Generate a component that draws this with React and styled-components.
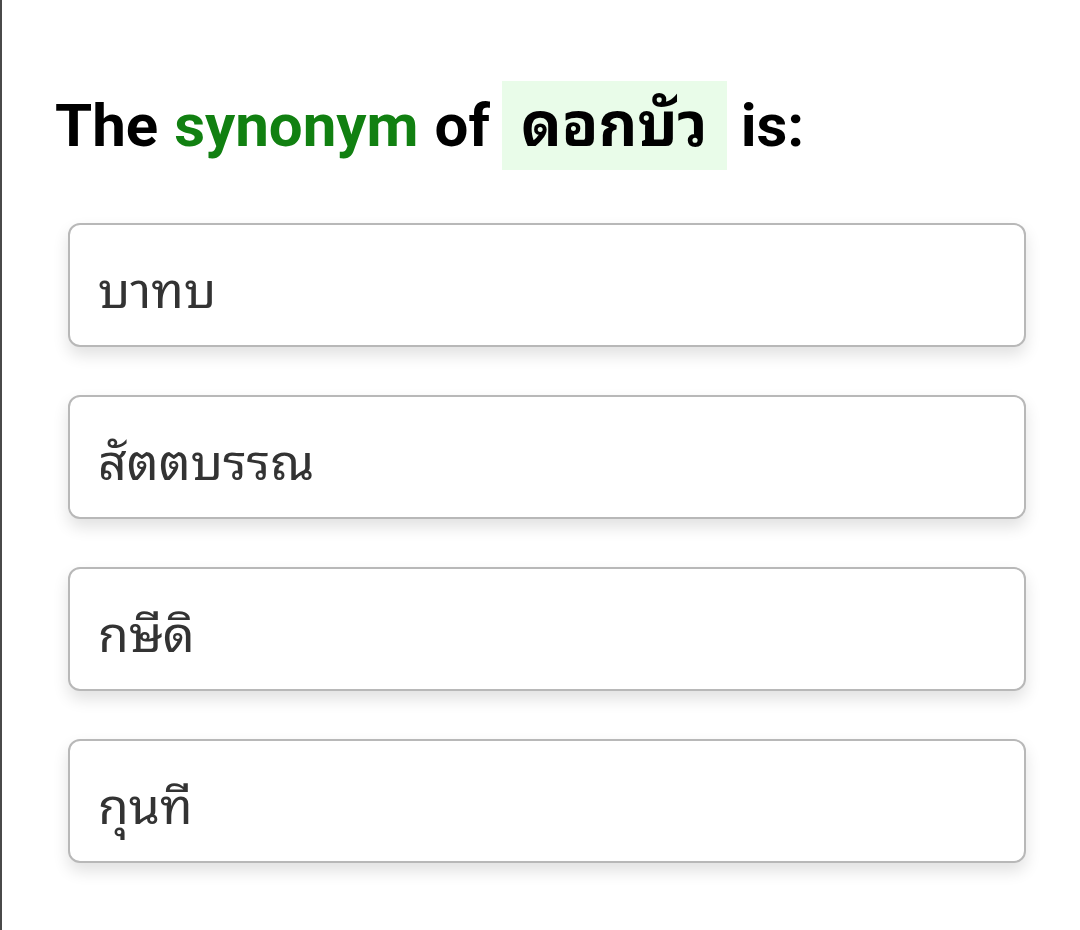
import React from "react";
import styled, { createGlobalStyle } from "styled-components";

const GlobalStyle = createGlobalStyle`
  html, body {
    margin: 0;
    padding: 0;
    background: #ffffff;
  }
  body {
    font-family: Roboto, "Noto Sans Thai Looped", Loma, Garuda, "Noto Sans", sans-serif;
  }
`;

const Page = styled.div`
  min-height: 930px;
  box-sizing: border-box;
  border-left: 2px solid #4a4a4a;
  padding: 81px 54px 0 53px;
`;

const Question = styled.h1`
  margin: 0;
  display: flex;
  align-items: center;
  font-size: 60px;
  font-weight: 700;
  color: #000;
  line-height: 89px;
`;

const Green = styled.span`
  color: #118011;
  margin: 0 16px;
`;

const Word = styled.span`
  background: #e9fce9;
  padding: 0 19px;
  margin: 0 14px 0 12px;
`;

const Options = styled.div`
  display: flex;
  flex-direction: column;
  gap: 48px;
  margin: 53px 0 0 13px;
`;

const Option = styled.button`
  display: flex;
  align-items: center;
  height: 124px;
  box-sizing: border-box;
  padding: 0 28px;
  background: #fff;
  border: 2px solid #b8b8b8;
  border-radius: 12px;
  box-shadow: 0 8px 16px rgba(0, 0, 0, 0.12);
  font-family: Roboto, "Noto Sans Thai Looped", Loma, Garuda, "Noto Sans", sans-serif;
  font-size: 50px;
  font-weight: 400;
  color: #333;
  text-align: left;
  cursor: pointer;
`;

const choices = ["บาทบ", "สัตตบรรณ", "กษีดิ", "กุนที"];

export default function App() {
  return (
    <>
      <GlobalStyle />
      <Page>
        <Question>
          The<Green>synonym</Green>of<Word>ดอกบัว</Word>is:
        </Question>
        <Options>
          {choices.map((c) => (
            <Option key={c}>{c}</Option>
          ))}
        </Options>
      </Page>
    </>
  );
}
